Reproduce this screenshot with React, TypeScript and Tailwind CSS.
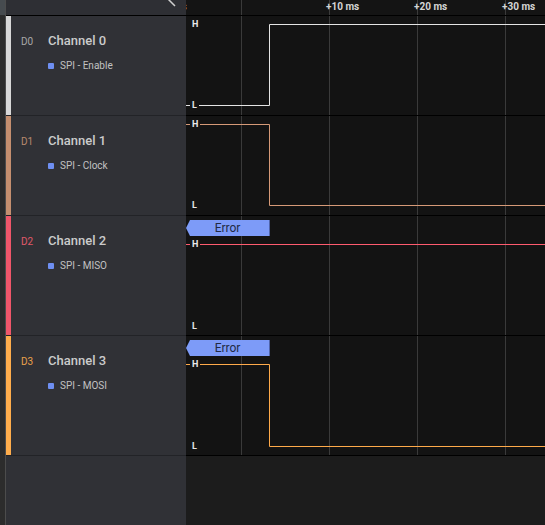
const channels = [
  {
    id: "D0",
    name: "Channel 0",
    proto: "SPI - Enable",
    bar: "bg-[#d8d8d8]",
    idColor: "text-[#a8a8a8]",
    stroke: "#e4e4e4",
    rowH: "h-[100px]",
    hTop: "top-[3px]",
    lTop: "top-[84px]",
    wave: "M0 89.5 H83.5 V8.5 H359",
    error: false,
  },
  {
    id: "D1",
    name: "Channel 1",
    proto: "SPI - Clock",
    bar: "bg-[#c58f6f]",
    idColor: "text-[#b98a6e]",
    stroke: "#d69a78",
    rowH: "h-[100px]",
    hTop: "top-[3px]",
    lTop: "top-[84px]",
    wave: "M0 8.5 H83.5 V89.5 H359",
    error: false,
  },
  {
    id: "D2",
    name: "Channel 2",
    proto: "SPI - MISO",
    bar: "bg-[#f0566a]",
    idColor: "text-[#e0596a]",
    stroke: "#ff5b6f",
    rowH: "h-[120px]",
    hTop: "top-[23px]",
    lTop: "top-[105px]",
    wave: "M0 28.5 H359",
    error: true,
  },
  {
    id: "D3",
    name: "Channel 3",
    proto: "SPI - MOSI",
    bar: "bg-[#ffad4c]",
    idColor: "text-[#eaa24c]",
    stroke: "#ffaa4a",
    rowH: "h-[120px]",
    hTop: "top-[23px]",
    lTop: "top-[105px]",
    wave: "M0 28.5 H83.5 V110.5 H359",
    error: true,
  },
];

const gridX = [55.5, 143.5, 231.5, 319.5];

function GridLines() {
  return (
    <svg className="absolute inset-0 h-full w-full" width="359" height="120">
      {gridX.map((x) => (
        <line key={x} x1={x} x2={x} y1="0" y2="200" stroke="#3a3a3a" strokeWidth="1" />
      ))}
    </svg>
  );
}

function ChannelRow({ ch }: { ch: (typeof channels)[number] }) {
  return (
    <div className={`flex ${ch.rowH}`}>
      <div className="w-[180px] flex border-b border-[#222327] bg-[#303136]">
        <div className={`w-[5px] ${ch.bar}`} />
        <div className="flex items-baseline pl-[10px] pt-[16px]">
          <span className={`w-[27px] text-[10px] ${ch.idColor}`}>{ch.id}</span>
          <div className="flex flex-col">
            <span className="text-[13px] leading-[17px] font-medium text-[#cbcbcb]">{ch.name}</span>
            <div className="mt-[11px] flex items-center gap-[6px]">
              <span className="h-[6px] w-[6px] rounded-[1px] bg-[#6e8ff2]" />
              <span className="text-[10px] leading-[12px] text-[#c2c2c2]">{ch.proto}</span>
            </div>
          </div>
        </div>
      </div>
      <div className="relative flex-1 border-b border-black bg-[#131313] overflow-hidden">
        <GridLines />
        <svg className="absolute inset-0 h-full w-full" width="359" height="120">
          <path d={ch.wave} fill="none" stroke={ch.stroke} strokeWidth="1" />
        </svg>
        {ch.error && (
          <div className="absolute left-0 top-[4px] flex h-[16px] w-[84px] items-center justify-center border-r border-[#4f63a8] bg-[#7d9bf8] [clip-path:polygon(4px_0,100%_0,100%_100%,4px_100%,0_50%)]">
            <span className="text-[12px] leading-none text-[#222a44]">Error</span>
          </div>
        )}
        <span className={`absolute left-[4px] ${ch.hTop} bg-[#141414] px-[2px] text-[9px] leading-[11px] font-bold text-[#e8e8e8]`}>
          H
        </span>
        <span className={`absolute left-[4px] ${ch.lTop} bg-[#141414] px-[2px] text-[9px] leading-[11px] font-bold text-[#e8e8e8]`}>
          L
        </span>
      </div>
    </div>
  );
}

export default function App() {
  return (
    <div className="flex h-[525px] w-[545px] overflow-hidden bg-[#1c1c1c] font-['Roboto','Liberation_Sans',sans-serif]">
      <div className="flex w-[6px] flex-col border-r border-[#4c4c4c] bg-[#2c2c2c]">
        <div className="h-[15px] bg-[#464b4f]" />
      </div>
      <div className="flex flex-1 flex-col">
        <div className="flex h-[16px] border-b border-black">
          <div className="relative w-[180px] bg-[#2e2f34]">
            <svg className="absolute left-[160px] top-[-7px]" width="12" height="14" viewBox="0 0 12 14">
              <path d="M9 1 L3 7 L9 13" fill="none" stroke="#cfcfcf" strokeWidth="1.5" />
            </svg>
          </div>
          <div className="relative flex-1 overflow-hidden bg-[#141414]">
            <GridLines />
            <span className="absolute left-[-31px] top-[1px] text-[10px] leading-[12px] font-bold text-[#cfcfcf]">-10 ms</span>
            <span className="absolute left-[140px] top-[1px] text-[10px] leading-[12px] font-bold text-[#d4d4d4]">+10 ms</span>
            <span className="absolute left-[228px] top-[1px] text-[10px] leading-[12px] font-bold text-[#d4d4d4]">+20 ms</span>
            <span className="absolute left-[316px] top-[1px] text-[10px] leading-[12px] font-bold text-[#d4d4d4]">+30 ms</span>
          </div>
        </div>
        {channels.map((ch) => (
          <ChannelRow key={ch.id} ch={ch} />
        ))}
        <div className="flex flex-1">
          <div className="w-[180px] bg-[#303136]" />
          <div className="flex-1 bg-[#1c1c1c]" />
        </div>
      </div>
    </div>
  );
}
